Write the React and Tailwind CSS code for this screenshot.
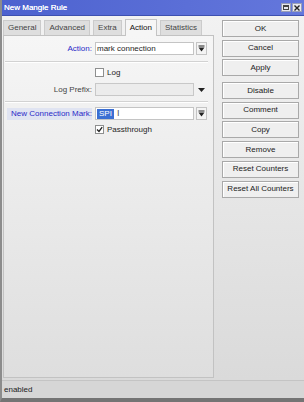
const font = { fontFamily: '"Liberation Sans", Arial, sans-serif' };

const DropBtn = () => (
  <div className="ml-[2px] w-[11px] h-[13px] border border-[#c4c4c4] bg-[#f4f4f4] flex items-center justify-center">
    <svg width="7" height="7" viewBox="0 0 7 7">
      <rect x="0.5" y="0.5" width="6" height="1" fill="#222" />
      <path d="M0.5 2.5 H6.5 L3.5 6.5 Z" fill="#222" />
    </svg>
  </div>
);

const Check = ({ checked }) => (
  <div className="w-[9px] h-[9px] border border-[#8e8f8f] bg-white flex items-center justify-center">
    {checked && (
      <svg width="7" height="7" viewBox="0 0 7 7">
        <path d="M1 3.5 L3 5.5 L6.2 1.2" stroke="#222" strokeWidth="1.3" fill="none" />
      </svg>
    )}
  </div>
);

const Sep = () => (
  <div className="mr-[5px] border-t border-[#d2d2d2] border-b border-b-white" />
);

const tabs = ['General', 'Advanced', 'Extra', 'Action', 'Statistics'];
const buttons = ['OK', 'Cancel', 'Apply', 'Disable', 'Comment', 'Copy', 'Remove', 'Reset Counters', 'Reset All Counters'];

export default function App() {
  return (
    <div style={font} className="w-[304px] h-[402px] flex flex-col bg-[#e6e6e6] border-l-2 border-l-[#8c8c8c] border-b-4 border-b-[#747474] text-[8px] text-[#1e1e1e] overflow-hidden">
      <div className="h-[16px] shrink-0 flex items-center justify-between pl-[2px] pr-[2px] bg-gradient-to-r from-[#4d62cf] to-[#6477dc] border-b border-[#3d50b0]">
        <span className="text-white text-[8px] font-medium [text-shadow:0_0_0.4px_#fff]">New Mangle Rule</span>
        <div className="flex gap-[1px]">
          <div className="w-[10px] h-[9px] bg-[#e8e8ee] border border-[#9aa0b8] flex items-start justify-center">
            <div className="w-[6px] h-[5px] mt-[1px] border border-[#444] border-t-2" />
          </div>
          <div className="w-[10px] h-[9px] bg-[#e8e8ee] border border-[#9aa0b8] flex items-center justify-center">
            <svg width="6" height="6" viewBox="0 0 6 6">
              <path d="M0.5 0.5 L5.5 5.5 M5.5 0.5 L0.5 5.5" stroke="#222" strokeWidth="1.4" />
            </svg>
          </div>
        </div>
      </div>

      <div className="flex-1 flex bg-gradient-to-b from-[#f2f2f2] to-[#dadada]">
        <div className="w-[212px] pl-[1px] pt-[4px] flex flex-col">
          <div className="flex items-end h-[15px] gap-[3px] relative z-10">
            {tabs.map((t) =>
              t === 'Action' ? (
                <div key={t} className="h-[17px] px-[4px] flex items-center bg-[#f6f6f6] border border-[#c4c4c4] border-b-0 -mb-[1px] text-[#111]">
                  {t}
                </div>
              ) : (
                <div key={t} className="h-[15px] px-[4px] flex items-center bg-[#dedede] border border-[#cbcbcb] border-b-0 text-[#444]">
                  {t}
                </div>
              )
            )}
          </div>
          <div className="flex-1 mb-[2px] border border-[#c2c2c2] bg-gradient-to-b from-[#f6f6f6] to-[#dedede] pt-[6px] pl-[1px]">
            <div className="flex items-center h-[13px]">
              <div className="w-[87px] text-right text-[#2a2ac8]">Action:</div>
              <div className="ml-[3px] w-[99px] h-[13px] border border-[#c4c4c4] bg-white flex items-center pl-[1px]">mark connection</div>
              <DropBtn />
            </div>
            <div className="mt-[6px]"><Sep /></div>
            <div className="mt-[5px] flex items-center h-[9px]">
              <div className="w-[87px]" />
              <div className="ml-[3px]"><Check /></div>
              <span className="ml-[3px]">Log</span>
            </div>
            <div className="mt-[6px] flex items-center h-[13px]">
              <div className="w-[87px] text-right text-[#444]">Log Prefix:</div>
              <div className="ml-[3px] w-[99px] h-[13px] border border-[#c8c8c8] bg-[#ececec]" />
              <div className="ml-[2px] w-[11px] flex justify-center">
                <svg width="7" height="4" viewBox="0 0 7 4"><path d="M0 0 H7 L3.5 4 Z" fill="#222" /></svg>
              </div>
            </div>
            <div className="mt-[5px]"><Sep /></div>
            <div className="mt-[4px] flex items-center h-[13px]">
              <div className="w-[87px] flex justify-end">
                <span className="pl-[4px] bg-[#e0e4f2] text-[#2a2ac8]">New Connection Mark:</span>
              </div>
              <div className="ml-[3px] w-[99px] h-[13px] border border-[#c4c4c4] bg-white flex items-center pl-[1px]">
                <span className="bg-[#3b6fd3] text-white px-[2px] leading-[10px]">SPI</span>
                <span className="ml-[3px] text-[#555] text-[9px] leading-none">I</span>
              </div>
              <DropBtn />
            </div>
            <div className="mt-[5px] flex items-center h-[9px]">
              <div className="w-[87px]" />
              <div className="ml-[3px]"><Check checked /></div>
              <span className="ml-[3px]">Passthrough</span>
            </div>
          </div>
        </div>

        <div className="flex-1 pl-[8px] pt-[4px] flex flex-col gap-[2.7px]">
          {buttons.map((b) => (
            <div
              key={b}
              className={`w-[77px] h-[17px] shrink-0 flex items-center justify-center border border-[#a9a9a9] bg-[#efefef] shadow-[inset_1px_1px_0_#ffffff] text-[#222] ${b === 'Disable' ? 'mt-[3px]' : ''}`}
            >
              {b}
            </div>
          ))}
        </div>
      </div>

      <div className="h-[18px] shrink-0 flex items-center px-[2px] bg-[#d6d6d6] border-t border-[#c4c4c4]">
        <span className="text-[#222]">enabled</span>
      </div>
    </div>
  );
}
